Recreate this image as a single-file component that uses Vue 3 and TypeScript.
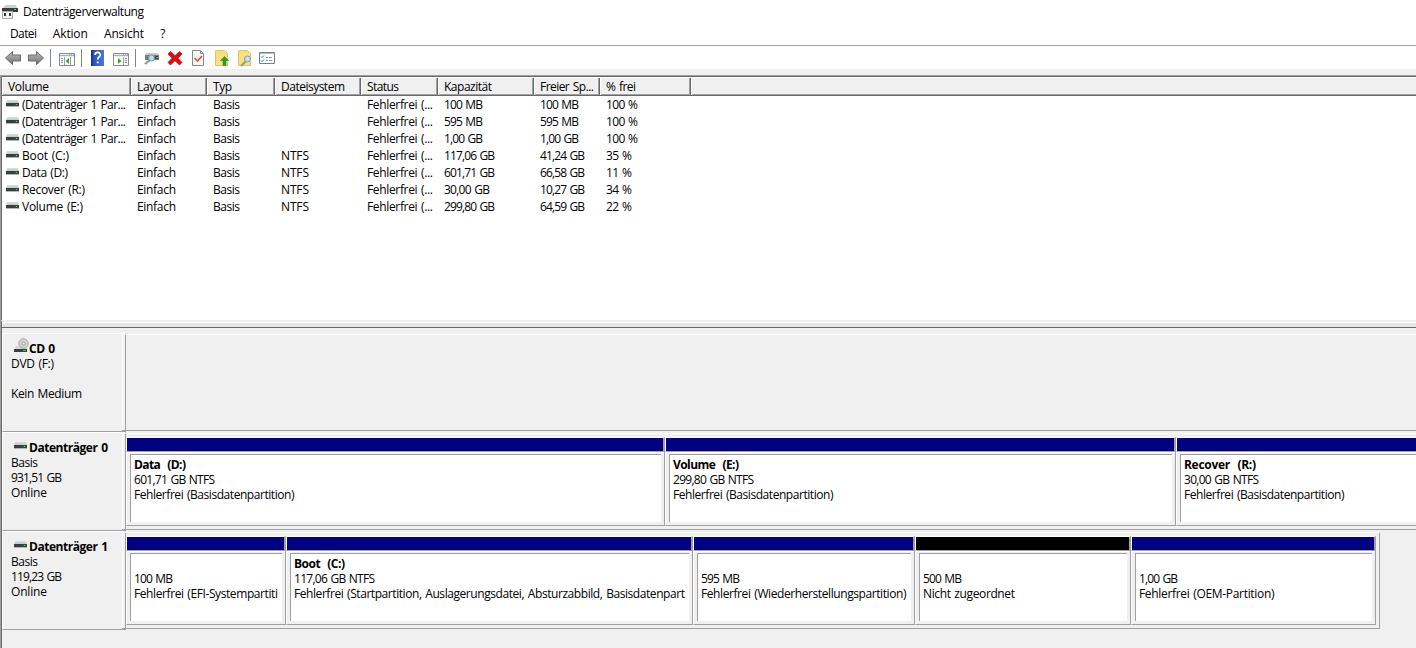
<script setup lang="ts">
interface Column { label: string; width: number }
interface Partition { name: string; size: string; status: string; width: number; free?: boolean }
interface Disk { name: string; lines: string[]; cd?: boolean; width: number; partitions: Partition[] }

// Advance widths in pixels of the interface font, per label
const advances: Record<string, number> = {
  'Datenträgerverwaltung': 121, 'Datei': 27, 'Aktion': 35, 'Ansicht': 40, '?': 6,
  'Volume': 41, 'Layout': 36, 'Typ': 19, 'Dateisystem': 64, 'Status': 32, 'Kapazität': 48,
  'Freier Sp...': 54, '% frei': 30, '(Datenträger 1 Par...': 104, 'Boot (C:)': 47, 'Data (D:)': 46,
  'Recover (R:)': 63, 'Volume (E:)': 61, 'Einfach': 39, 'Basis': 27, 'NTFS': 28, 'Fehlerfrei (...': 66,
  '100 MB': 39, '595 MB': 39, '500 MB': 39, '1,00 GB': 39, '117,06 GB': 51, '601,71 GB': 51,
  '30,00 GB': 46, '299,80 GB': 51, '41,24 GB': 45, '66,58 GB': 45, '10,27 GB': 45, '64,59 GB': 45,
  '100 %': 32, '35 %': 26, '11 %': 26, '34 %': 26, '22 %': 26,
  'CD 0': 26, 'DVD (F:)': 43, 'Kein Medium': 71, 'Datenträger 0': 79, 'Datenträger 1': 79,
  '931,51 GB': 51, '119,23 GB': 51, 'Online': 36,
  'Data  (D:)': 52, 'Volume  (E:)': 66, 'Recover  (R:)': 72, 'Boot  (C:)': 51,
  '601,71 GB NTFS': 81, '299,80 GB NTFS': 81, '30,00 GB NTFS': 75, '117,06 GB NTFS': 81,
  'Fehlerfrei (Basisdatenpartition)': 160.500, 'Fehlerfrei (EFI-Systempartiti': 144,
  'Fehlerfrei (Startpartition, Auslagerungsdatei, Absturzabbild, Basisdatenpart': 391,
  'Fehlerfrei (Wiederherstellungspartition)': 205.500, 'Nicht zugeordnet': 92, 'Fehlerfrei (OEM-Partition)': 135.500,
}

const vFit = {
  mounted(el: HTMLElement) {
    const text = el.textContent ?? ''
    const target = advances[text]
    if (!target || text.length < 2) return
    const natural = el.getBoundingClientRect().width
    el.style.letterSpacing = `${(target - natural) / (text.length - 1)}px`
  },
}

const menus = ['Datei', 'Aktion', 'Ansicht', '?']
const columns: Column[] = [
  { label: 'Volume', width: 129 }, { label: 'Layout', width: 76 }, { label: 'Typ', width: 68 },
  { label: 'Dateisystem', width: 86 }, { label: 'Status', width: 77 }, { label: 'Kapazität', width: 96 },
  { label: 'Freier Sp...', width: 66 }, { label: '% frei', width: 91 },
]
const part = '(Datenträger 1 Par...'
const state = 'Fehlerfrei (...'
const rows: string[][] = [
  [part, 'Einfach', 'Basis', '', state, '100 MB', '100 MB', '100 %'],
  [part, 'Einfach', 'Basis', '', state, '595 MB', '595 MB', '100 %'],
  [part, 'Einfach', 'Basis', '', state, '1,00 GB', '1,00 GB', '100 %'],
  ['Boot (C:)', 'Einfach', 'Basis', 'NTFS', state, '117,06 GB', '41,24 GB', '35 %'],
  ['Data (D:)', 'Einfach', 'Basis', 'NTFS', state, '601,71 GB', '66,58 GB', '11 %'],
  ['Recover (R:)', 'Einfach', 'Basis', 'NTFS', state, '30,00 GB', '10,27 GB', '34 %'],
  ['Volume (E:)', 'Einfach', 'Basis', 'NTFS', state, '299,80 GB', '64,59 GB', '22 %'],
]
const basic = 'Fehlerfrei (Basisdatenpartition)'
const disks: Disk[] = [
  { name: 'CD 0', lines: ['DVD (F:)', '', 'Kein Medium'], cd: true, width: 1400, partitions: [] },
  {
    name: 'Datenträger 0', lines: ['Basis', '931,51 GB', 'Online'], width: 1400,
    partitions: [
      { name: 'Data  (D:)', size: '601,71 GB NTFS', status: basic, width: 539 },
      { name: 'Volume  (E:)', size: '299,80 GB NTFS', status: basic, width: 511 },
      { name: 'Recover  (R:)', size: '30,00 GB NTFS', status: basic, width: 340 },
    ],
  },
  {
    name: 'Datenträger 1', lines: ['Basis', '119,23 GB', 'Online'], width: 1258,
    partitions: [
      { name: '', size: '100 MB', status: 'Fehlerfrei (EFI-Systempartiti', width: 160 },
      { name: 'Boot  (C:)', size: '117,06 GB NTFS', status: 'Fehlerfrei (Startpartition, Auslagerungsdatei, Absturzabbild, Basisdatenpart', width: 407 },
      { name: '', size: '595 MB', status: 'Fehlerfrei (Wiederherstellungspartition)', width: 222 },
      { name: '', size: '500 MB', status: 'Nicht zugeordnet', width: 216, free: true },
      { name: '', size: '1,00 GB', status: 'Fehlerfrei (OEM-Partition)', width: 245 },
    ],
  },
]
</script>

<template>
  <div class="window">
    <svg class="defs" width="0" height="0">
      <defs>
        <linearGradient id="metal" x1="0" y1="0" x2="0" y2="1">
          <stop offset="0" stop-color="#bcbcbc" /><stop offset="1" stop-color="#747474" />
        </linearGradient>
        <linearGradient id="blue" x1="0" y1="0" x2="1" y2="0">
          <stop offset="0" stop-color="#2546b4" /><stop offset="1" stop-color="#4c78dc" />
        </linearGradient>
        <linearGradient id="lid" x1="0" y1="0" x2="0" y2="1">
          <stop offset="0" stop-color="#dcdee0" /><stop offset="1" stop-color="#bfc2c6" />
        </linearGradient>
        <symbol id="drive" viewBox="0 0 13 7">
          <path d="M1 0h11l1 3.500H0z" fill="url(#lid)" />
          <path d="M0 3h13v4H0z" fill="#b4b7ba" />
          <path d="M0 3h13v3H0z" fill="#3c3f42" />
          <path d="M9 4h3v1H9z" fill="#177b22" /><path d="M10 4h1v1h-1z" fill="#38f050" />
        </symbol>
      </defs>
    </svg>
    <header class="title">
      <svg width="17" height="18" viewBox="0 0 17 18">
        <path d="M3 2h11l1 3H1z" fill="#cdd0d3" /><path d="M0 5h16v4H0z" fill="#3a3d40" />
        <path d="M12 6h2v1h-2z" fill="#39d850" />
        <path d="M0 8h11v8H0z" fill="#a9abad" />
        <path d="M1 9h9v6H1z" fill="#f1f1f1" /><path d="M2 10h2v3H2zm5 0h2v3H7z" fill="#313437" />
      </svg>
      <span v-fit class="t">Datenträgerverwaltung</span>
    </header>
    <nav class="menu"><span v-for="m in menus" :key="m" v-fit class="t">{{ m }}</span></nav>
    <div class="toolbar">
      <svg width="280" height="22" viewBox="0 0 280 22">
        <path d="M5.500 12 12.500 5.500v3.500h8v6h-8v3.500z" fill="url(#metal)" stroke="#6a6a6a" />
        <path d="M43.500 12 36.500 5.500v3.500h-8v6h8v3.500z" fill="url(#metal)" stroke="#6a6a6a" />
        <path d="M50.500 3v18M81.500 3v18M135.500 3v18" stroke="#858585" />
        <g v-for="(x, i) in [59, 113]" :key="x" :transform="`translate(${x} 7)`">
          <path d="M.5.5h15v12H.5z" fill="#fff" stroke="#858d94" />
          <path d="M1 1h14v3H1z" fill="#aab2b8" />
          <path d="M1 1.500h9M11 1.500h1M13 1.500h1M1 3.500h14" stroke="#e8ecee" />
          <g v-if="i === 0">
            <path d="M5.500 4v8" stroke="#9aa3aa" /><path d="M11.500 4v8" stroke="#9aa3aa" />
            <path d="M2 5.500h2M2 7.500h2M2 9.500h2" stroke="#83909b" />
            <path d="M10 5v6L6.500 8z" fill="#35a928" />
          </g>
          <g v-else>
            <path d="M10.500 4v8" stroke="#9aa3aa" /><path d="M12 5.500h2M12 7.500h2M12 9.500h2" stroke="#83909b" />
            <path d="M5 5v6l3.500-3z" fill="#35a928" />
          </g>
        </g>
        <path d="M91 4h13v16H91z" fill="url(#blue)" /><path d="M91 4h2v16h-2z" fill="#1c3994" />
        <path d="M95 9c.2-3.500 5.500-3.300 5.300 0-.1 2-2.600 2-2.600 4.500M96.700 16.300h2" fill="none" stroke="#fff" stroke-width="1.700" />
        <path d="M146 7h12l1 3h-14z" fill="#c6cacc" /><path d="M145 9h14v5h-14z" fill="#777d81" /><path d="M154 10h4v3h-4z" fill="#3c4143" /><path d="M156 11h2v1h-2z" fill="#39c94b" />
        <path d="m150 14-5 4" stroke="#91969a" stroke-width="2.200" />
        <circle cx="151.500" cy="12" r="3" fill="#b9dded" stroke="#7391a3" />
        <path d="M168 8l2.500-2.500 4.500 4.200 4.500-4.200L182 8l-4 4.200 4 4.300-2.500 2.500-4.500-4.300-4.500 4.300L168 16.500l4-4.300z" fill="#e00b12" stroke="#a30a0d" stroke-width=".7" />
        <path d="M192.500 4.500h8l3 3v12h-11z" fill="#f4f5f7" stroke="#858c91" /><path d="M200.500 4.500v3h3" fill="none" stroke="#858c91" />
        <path d="m194.500 12 3 3 4.500-5" fill="none" stroke="#e4572e" stroke-width="1.700" />
        <path d="M215.500 4.500h9l3 3v12h-12z" fill="#fbdf80" stroke="#e3c462" />
        <path d="m224.500 10.500 4 4h-2.500v5h-3v-5h-2.500z" fill="#24a52c" stroke="#118b1b" stroke-width=".5" />
        <path d="M238.500 4.500h9l3 3v12h-12z" fill="#fbdf80" stroke="#e3c462" />
        <path d="m246 15-5 5" stroke="#919ba2" stroke-width="2" /><circle cx="247.500" cy="13" r="3" fill="#c7e4f2" stroke="#789cae" />
        <path d="M259.500 6.500h15v11h-15z" fill="#fff" stroke="#77838b" /><path d="M260 7h14v1h-14z" fill="#b4bdc3" />
        <path d="m261 10.500 1 1 2-2M261 14.500l1 1 2-2" fill="none" stroke="#297fcb" /><path d="M266 11.500h2M269 11.500h3M266 14.500h2M269 14.500h3" stroke="#8b979f" />
      </svg>
    </div>
    <div class="gap"></div>
    <main class="body">
      <section class="list">
        <div class="row head">
          <div v-for="c in columns" :key="c.label" class="cell" :style="{ width: c.width + 'px' }"><span v-fit class="t">{{ c.label }}</span></div>
          <div class="cell rest"></div>
        </div>
        <div v-for="(r, i) in rows" :key="i" class="row">
          <div v-for="(v, j) in r" :key="j" class="cell" :style="{ width: columns[j].width + 'px' }">
            <svg v-if="j === 0" class="drive" width="13" height="7"><use href="#drive" /></svg>
            <span v-fit class="t">{{ v }}</span>
          </div>
        </div>
      </section>
      <div class="splitter"></div>
      <section class="graph">
        <div v-for="d in disks" :key="d.name" class="disk">
          <div class="label">
            <div class="name">
              <svg v-if="d.cd" class="cd" width="15" height="16" viewBox="0 0 15 16">
                <path d="M2 8h10l2 4H0z" fill="#d4d6d8" />
                <circle cx="9.500" cy="5.500" r="4.700" fill="#d2d4d5" stroke="#a2a5a6" /><circle cx="9.500" cy="5.500" r="1.600" fill="#f4f4f4" stroke="#999" />
                <path d="M0 11h13v3H0z" fill="#3c3f42" /><path d="M9 12h3v1H9z" fill="#38cf46" />
              </svg>
              <svg v-else class="hd" width="13" height="7"><use href="#drive" /></svg>
              <b v-fit class="t">{{ d.name }}</b>
            </div>
            <div v-for="(l, i) in d.lines" :key="i" class="line"><span v-fit class="t">{{ l }}</span></div>
          </div>
          <div class="track" :style="{ width: d.width + 'px' }">
            <div v-for="(p, i) in d.partitions" :key="i" class="part" :style="{ width: p.width + 'px' }">
              <div class="bar" :class="{ free: p.free }"></div>
              <div class="frame">
                <div class="inset">
                  <div class="line"><b v-fit class="t">{{ p.name }}</b></div>
                  <div class="line"><span v-fit class="t">{{ p.size }}</span></div>
                  <div class="line"><span v-fit class="t">{{ p.status }}</span></div>
                </div>
              </div>
            </div>
          </div>
        </div>
      </section>
    </main>
  </div>
</template>

<style>
html, body { margin: 0; overflow: hidden; }
</style>
<style scoped>
* { box-sizing: border-box; }
.window { width: 1416px; height: 648px; overflow: hidden; background: #fff; color: #000; font: 12px/15px "Open Sans", "Noto Sans", sans-serif; word-spacing: 1px; display: flex; flex-direction: column; }
.window svg { display: block; flex: none; }
.window .defs { position: absolute; }
.t { display: inline-block; white-space: pre; margin-top: -2px; }
.title { height: 24px; flex: none; display: flex; align-items: center; padding-left: 2px; gap: 4px; }
.title .t { margin-top: -1px; }
.menu { height: 21px; flex: none; display: flex; align-items: center; padding-left: 10px; gap: 16.4px; }
.toolbar { height: 24px; flex: none; border-top: 1px solid #a0a0a0; }
.gap { height: 6px; flex: none; background: #f0f0f0; }
.body { flex: 1; min-height: 0; border-top: 1px solid #a0a0a0; border-left: 1px solid #a0a0a0; display: flex; flex-direction: column; }
.list { height: 244px; flex: none; border-top: 1px solid #696969; border-left: 1px solid #696969; }
.row { height: 17px; display: flex; }
.cell { flex: none; height: 100%; padding-left: 6px; display: flex; align-items: center; }
.cell:first-child { padding-left: 4px; }
.row:not(.head) .cell:first-child { gap: 3px; }
.drive { margin-top: -4px; }
.head { height: 19px; background: #f0f0f0; border-top: 1px solid #fff; border-bottom: 1px solid #696969; margin-bottom: 1px; }
.head .cell { border-left: 1px solid #fff; border-right: 1px solid #696969; padding-left: 5px; padding-top: 2px; box-shadow: inset -1px 0 #a0a0a0, inset 0 -1px #a0a0a0; }
.head .cell:first-child { padding-left: 5px; }
.head .rest { flex: 1; border-right: 0; box-shadow: inset 0 -1px #a0a0a0; }
.splitter { height: 8px; flex: none; border-top: 2px solid #f0f0f0; border-bottom: 1px solid #696969; border-left: 1px solid #696969; background: #e6e6e6; box-shadow: inset 1px 1px #fff; }
.graph { flex: 1; background: #f0f0f0; border-left: 1px solid #696969; padding-top: 5px; min-height: 0; overflow: hidden; }
.disk { height: 99px; display: flex; }
.label { width: 124px; flex: none; border: 1px solid #a0a0a0; border-left-color: #fff; border-top-color: #fff; padding: 7px 0 0 8px; box-shadow: inset -2px 0 #f0f0f0, inset -3px 0 #fff; }
.name { height: 16px; display: flex; align-items: center; padding-left: 3px; }
.name .t { margin-left: 2px; }
.hd { margin-top: -6px; }
.cd { margin: -6px -2px 0 0; }
.line { height: 15px; display: flex; align-items: center; white-space: nowrap; }
.track { height: 97px; margin-top: 1px; margin-left: -4px; flex: none; border-top: 1px solid #fff; border-bottom: 1px solid #a0a0a0; border-right: 1px solid #a0a0a0; padding: 3px 0 0 4px; display: flex; }
.part { height: 89px; flex: none; display: flex; flex-direction: column; }
.bar { height: 14px; flex: none; border-top: 1px solid #fff; border-left: 1px solid #fff; border-right: 2px solid #a0a0a0; background: #000080; }
.bar.free { background: #000; }
.frame { flex: 1; border: 1px solid #a0a0a0; border-left-color: #fff; padding: 2px 3px 3px; box-shadow: inset 0 1px #fff; }
.inset { height: 68px; overflow: hidden; background: #fff; border-top: 1px solid #a0a0a0; border-left: 1px solid #a0a0a0; padding: 3px 0 0 3px; }
</style>
